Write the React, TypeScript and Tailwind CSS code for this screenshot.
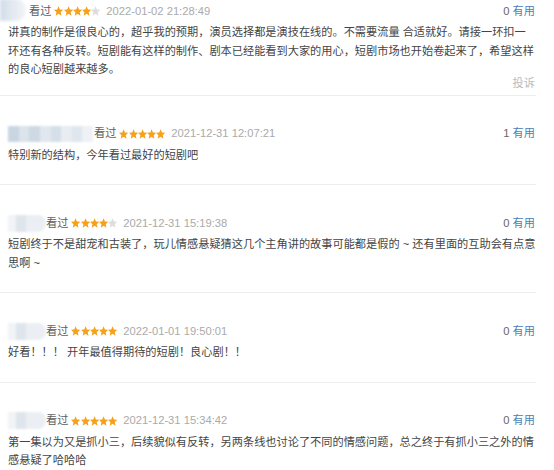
import React from "react";

type Review = {
  avatar: "top" | "wide" | "small";
  stars: number;
  date: string;
  votes: string;
  lines: string[];
  report?: boolean;
};

const reviews: Review[] = [
  {
    avatar: "top",
    stars: 4,
    date: "2022-01-02 21:28:49",
    votes: "0",
    lines: [
      "讲真的制作是很良心的，超乎我的预期，演员选择都是演技在线的。不需要流量 合适就好。请接一环扣一",
      "环还有各种反转。短剧能有这样的制作、剧本已经能看到大家的用心，短剧市场也开始卷起来了，希望这样",
      "的良心短剧越来越多。",
    ],
    report: true,
  },
  {
    avatar: "wide",
    stars: 5,
    date: "2021-12-31 12:07:21",
    votes: "1",
    lines: ["特别新的结构，今年看过最好的短剧吧"],
  },
  {
    avatar: "small",
    stars: 4,
    date: "2021-12-31 15:19:38",
    votes: "0",
    lines: [
      "短剧终于不是甜宠和古装了，玩儿情感悬疑猜这几个主角讲的故事可能都是假的 ~ 还有里面的互助会有点意",
      "思啊 ~",
    ],
  },
  {
    avatar: "small",
    stars: 5,
    date: "2022-01-01 19:50:01",
    votes: "0",
    lines: ["好看！！！ 开年最值得期待的短剧！良心剧！！"],
  },
  {
    avatar: "small",
    stars: 5,
    date: "2021-12-31 15:34:42",
    votes: "0",
    lines: [
      "第一集以为又是抓小三，后续貌似有反转，另两条线也讨论了不同的情感问题，总之终于有抓小三之外的情",
      "感悬疑了哈哈哈",
    ],
  },
];

const Star = ({ on }: { on: boolean }) => (
  <svg width="9.2" height="10" viewBox="1.5 1 21 21" preserveAspectRatio="none">
    <path
      d="M12 1.5l3.1 7 7.4.6-5.6 4.9 1.7 7.4L12 17.5l-6.6 3.9 1.7-7.4L1.5 9.1l7.4-.6z"
      fill={on ? "#f7a11a" : "#dddddd"}
    />
  </svg>
);

const Avatar = ({ kind }: { kind: Review["avatar"] }) => {
  if (kind === "top") {
    return (
      <div className="w-[29px] h-[20px] shrink-0 relative -mt-[4px]">
        <div className="absolute left-0 top-0 w-[26px] h-[22px] rounded-r-[10px] bg-gradient-to-r from-[#d3dde8] via-[#e3e9f0] to-[#f2f4f7] blur-[1.5px]" />
      </div>
    );
  }
  if (kind === "wide") {
    const cols = ["#c9d6e2", "#dbe3eb", "#ced9e4", "#e1e7ee", "#d6dfe8", "#e8edf2", "#dfe6ed", "#eef1f5"];
    return (
      <div className="w-[85px] h-[16px] shrink-0 flex blur-[1px] mr-[1px]">
        {cols.map((c, i) => (
          <div key={i} className="flex-1 h-full" style={{ backgroundColor: c }} />
        ))}
      </div>
    );
  }
  return (
    <div className="w-[38px] h-[17px] shrink-0 flex blur-[1px]">
      <div className="w-[8px] h-full bg-[#f1f3f6]" />
      <div className="w-[10px] h-full bg-[#dfe5ec]" />
      <div className="flex-1 h-full rounded-r-[8px] bg-[#ebeff3]" />
    </div>
  );
};

export default function App() {
  return (
    <div className="w-[554px] h-[470px] overflow-hidden bg-white font-['Liberation_Sans','Noto_Sans_CJK_SC',sans-serif] text-[11.2px]">
      <div className="w-[536px]">
        {reviews.map((r, idx) => (
          <div
            key={idx}
            className={`border-b border-[#eeeeee] ${
              idx === 0 ? "pt-[1px] pb-[5px]" : "pt-[28px] pb-[20px]"
            }`}
          >
            <div className={`flex items-center h-[20px] ${r.avatar === "top" ? "" : "pl-[8px]"}`}>
              <Avatar kind={r.avatar} />
              <span className="text-[#5e5e5e]">看过</span>
              <div className="flex ml-[3px]">
                {[0, 1, 2, 3, 4].map((i) => (
                  <Star key={i} on={i < r.stars} />
                ))}
              </div>
              <span className="ml-[6px] text-[#aaaaaa]">{r.date}</span>
              <div className="ml-auto pr-[1px] whitespace-nowrap">
                <span className="text-[#666666]">{r.votes}</span>{" "}
                <span className="text-[#4a82b6]">有用</span>
              </div>
            </div>
            <div className="mt-[2px] pl-[8px] leading-[18.5px] text-[#444444]">
              {r.lines.map((l, i) => (
                <div key={i} className="whitespace-nowrap">
                  {l}
                </div>
              ))}
            </div>
            {r.report && (
              <div className="-mt-[3px] text-right pr-[1px] leading-[14px] text-[#bbbbbb]">投诉</div>
            )}
          </div>
        ))}
      </div>
    </div>
  );
}
